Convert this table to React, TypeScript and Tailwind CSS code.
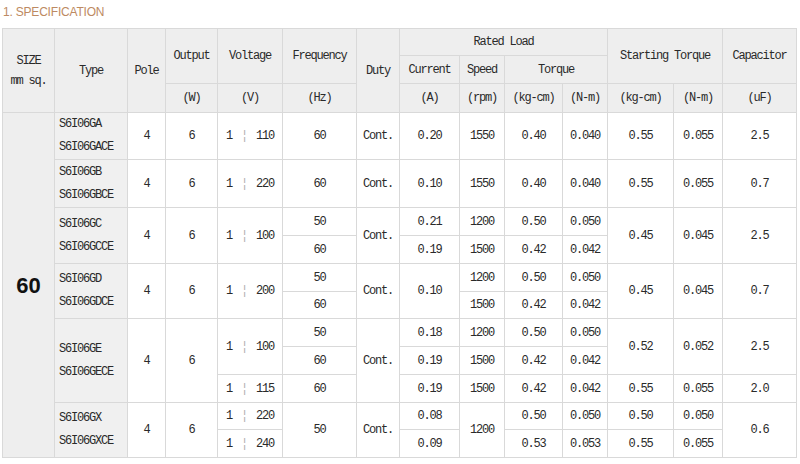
import React from "react";

type TdProps = {
  children?: React.ReactNode;
  rs?: number;
  cs?: number;
  className?: string;
};

function Td({ children, rs, cs, className = "" }: TdProps) {
  return (
    <td
      rowSpan={rs}
      colSpan={cs}
      className={`border border-[#d9d9d9] p-0 text-center align-middle ${className}`}
    >
      {children}
    </td>
  );
}

function Th({ children, rs, cs, className = "" }: TdProps) {
  return (
    <th
      rowSpan={rs}
      colSpan={cs}
      className={`border border-[#d9d9d9] bg-[#eeeeee] p-0 text-center align-middle font-normal ${className}`}
    >
      {children}
    </th>
  );
}

function V({ v }: { v: string }) {
  return (
    <span className="inline-flex items-center">
      <span>1</span>
      <span className="mx-[9px] text-[#b0b0b0]">¦</span>
      <span>{v}</span>
    </span>
  );
}

function TypeCell({ a, b, rs }: { a: string; b: string; rs?: number }) {
  return (
    <td rowSpan={rs} className="border border-[#d9d9d9] bg-[#f0f0f0] p-0 pl-[4px] text-left align-middle leading-[23px]">
      {a}
      <br />
      {b}
    </td>
  );
}

export default function App() {
  const widths = [52, 73, 38, 52, 65, 74, 43, 60, 45, 58, 45, 66, 49, 74];
  return (
    <div className="w-[800px] h-[464px] bg-white overflow-hidden">
      <div className="h-[28px] pl-[3px] pt-[5px] leading-[14px] text-[12px] tracking-[-0.2px] text-[#bd8a62] [font-family:'Liberation_Sans',Arial,sans-serif]">
        1. SPECIFICATION
      </div>
      <div className="pl-[2px]">
        <table className="table-fixed border-collapse w-[795px] text-[12px] tracking-[-1.2px] text-[#2a2a2a] [font-family:'Liberation_Mono','DejaVu_Sans_Mono',monospace]">
          <colgroup>
            {widths.map((w, i) => (
              <col key={i} style={{ width: w }} />
            ))}
          </colgroup>
          <thead>
            <tr className="h-[27px]">
              <Th rs={3} className="leading-[20px]">
                SIZE
                <br />
                mm sq.
              </Th>
              <Th rs={3}>Type</Th>
              <Th rs={3}>Pole</Th>
              <Th rs={2}>Output</Th>
              <Th rs={2}>Voltage</Th>
              <Th rs={2}>Frequency</Th>
              <Th rs={3}>Duty</Th>
              <Th cs={4}>Rated Load</Th>
              <Th cs={2} rs={2}>Starting Torque</Th>
              <Th rs={2}>Capacitor</Th>
            </tr>
            <tr className="h-[28px]">
              <Th>Current</Th>
              <Th>Speed</Th>
              <Th cs={2}>Torque</Th>
            </tr>
            <tr className="h-[29px]">
              <Th>(W)</Th>
              <Th>(V)</Th>
              <Th>(Hz)</Th>
              <Th>(A)</Th>
              <Th>(rpm)</Th>
              <Th>(kg-cm)</Th>
              <Th>(N-m)</Th>
              <Th>(kg-cm)</Th>
              <Th>(N-m)</Th>
              <Th>(uF)</Th>
            </tr>
          </thead>
          <tbody>
            {/* GA */}
            <tr className="h-[47px]">
              <Td rs={11} className="bg-[#eeeeee] text-[22px] font-bold tracking-normal text-[#111] [font-family:'Liberation_Sans',Arial,sans-serif]">
                60
              </Td>
              <TypeCell a="S6I06GA" b="S6I06GACE" />
              <Td>4</Td>
              <Td>6</Td>
              <Td><V v="110" /></Td>
              <Td>60</Td>
              <Td>Cont.</Td>
              <Td>0.20</Td>
              <Td>1550</Td>
              <Td>0.40</Td>
              <Td>0.040</Td>
              <Td>0.55</Td>
              <Td>0.055</Td>
              <Td>2.5</Td>
            </tr>
            {/* GB */}
            <tr className="h-[48px]">
              <TypeCell a="S6I06GB" b="S6I06GBCE" />
              <Td>4</Td>
              <Td>6</Td>
              <Td><V v="220" /></Td>
              <Td>60</Td>
              <Td>Cont.</Td>
              <Td>0.10</Td>
              <Td>1550</Td>
              <Td>0.40</Td>
              <Td>0.040</Td>
              <Td>0.55</Td>
              <Td>0.055</Td>
              <Td>0.7</Td>
            </tr>
            {/* GC */}
            <tr className="h-[28px]">
              <TypeCell rs={2} a="S6I06GC" b="S6I06GCCE" />
              <Td rs={2}>4</Td>
              <Td rs={2}>6</Td>
              <Td rs={2}><V v="100" /></Td>
              <Td>50</Td>
              <Td rs={2}>Cont.</Td>
              <Td>0.21</Td>
              <Td>1200</Td>
              <Td>0.50</Td>
              <Td>0.050</Td>
              <Td rs={2}>0.45</Td>
              <Td rs={2}>0.045</Td>
              <Td rs={2}>2.5</Td>
            </tr>
            <tr className="h-[28px]">
              <Td>60</Td>
              <Td>0.19</Td>
              <Td>1500</Td>
              <Td>0.42</Td>
              <Td>0.042</Td>
            </tr>
            {/* GD */}
            <tr className="h-[28px]">
              <TypeCell rs={2} a="S6I06GD" b="S6I06GDCE" />
              <Td rs={2}>4</Td>
              <Td rs={2}>6</Td>
              <Td rs={2}><V v="200" /></Td>
              <Td>50</Td>
              <Td rs={2}>Cont.</Td>
              <Td rs={2}>0.10</Td>
              <Td>1200</Td>
              <Td>0.50</Td>
              <Td>0.050</Td>
              <Td rs={2}>0.45</Td>
              <Td rs={2}>0.045</Td>
              <Td rs={2}>0.7</Td>
            </tr>
            <tr className="h-[27px]">
              <Td>60</Td>
              <Td>1500</Td>
              <Td>0.42</Td>
              <Td>0.042</Td>
            </tr>
            {/* GE */}
            <tr className="h-[28px]">
              <TypeCell rs={3} a="S6I06GE" b="S6I06GECE" />
              <Td rs={3}>4</Td>
              <Td rs={3}>6</Td>
              <Td rs={2}><V v="100" /></Td>
              <Td>50</Td>
              <Td rs={3}>Cont.</Td>
              <Td>0.18</Td>
              <Td>1200</Td>
              <Td>0.50</Td>
              <Td>0.050</Td>
              <Td rs={2}>0.52</Td>
              <Td rs={2}>0.052</Td>
              <Td rs={2}>2.5</Td>
            </tr>
            <tr className="h-[28px]">
              <Td>60</Td>
              <Td>0.19</Td>
              <Td>1500</Td>
              <Td>0.42</Td>
              <Td>0.042</Td>
            </tr>
            <tr className="h-[28px]">
              <Td><V v="115" /></Td>
              <Td>60</Td>
              <Td>0.19</Td>
              <Td>1500</Td>
              <Td>0.42</Td>
              <Td>0.042</Td>
              <Td>0.55</Td>
              <Td>0.055</Td>
              <Td>2.0</Td>
            </tr>
            {/* GX */}
            <tr className="h-[27px]">
              <TypeCell rs={2} a="S6I06GX" b="S6I06GXCE" />
              <Td rs={2}>4</Td>
              <Td rs={2}>6</Td>
              <Td><V v="220" /></Td>
              <Td rs={2}>50</Td>
              <Td rs={2}>Cont.</Td>
              <Td>0.08</Td>
              <Td rs={2}>1200</Td>
              <Td>0.50</Td>
              <Td>0.050</Td>
              <Td>0.50</Td>
              <Td>0.050</Td>
              <Td rs={2}>0.6</Td>
            </tr>
            <tr className="h-[28px]">
              <Td><V v="240" /></Td>
              <Td>0.09</Td>
              <Td>0.53</Td>
              <Td>0.053</Td>
              <Td>0.55</Td>
              <Td>0.055</Td>
            </tr>
          </tbody>
        </table>
      </div>
    </div>
  );
}
